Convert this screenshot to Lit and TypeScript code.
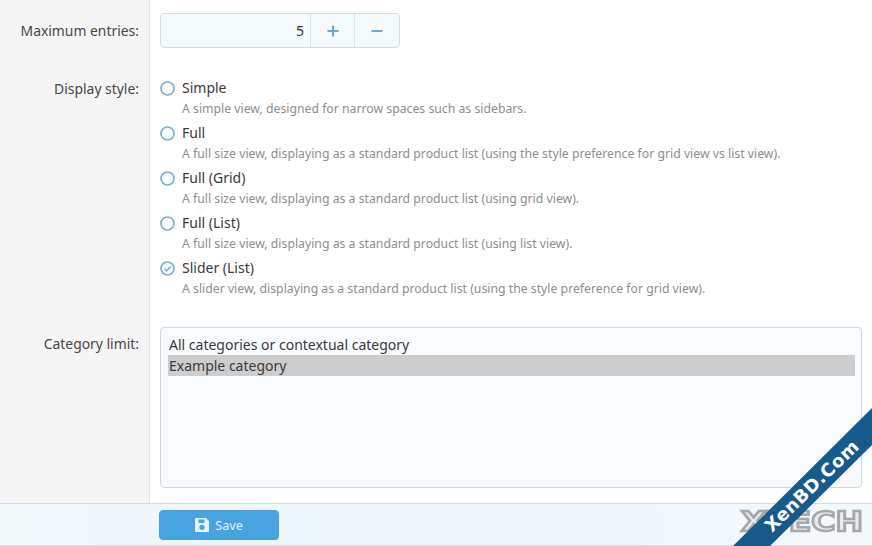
import { LitElement, html, css, svg } from "lit";
import { customElement } from "lit/decorators.js";

const OPTIONS = [
  ["Simple", "A simple view, designed for narrow spaces such as sidebars."],
  ["Full", "A full size view, displaying as a standard product list (using the style preference for grid view vs list view)."],
  ["Full (Grid)", "A full size view, displaying as a standard product list (using grid view)."],
  ["Full (List)", "A full size view, displaying as a standard product list (using list view)."],
  ["Slider (List)", "A slider view, displaying as a standard product list (using the style preference for grid view)."],
];

@customElement("app-root")
export class AppRoot extends LitElement {
  static styles = css`
    :host { display: block; position: relative; width: 872px; height: 546px; overflow: hidden; background: #fff;
      font-family: "Noto Sans", "Open Sans", sans-serif; font-size: 14px; color: #3a3a3a; }
    .form { height: 503px; display: grid; grid-template-columns: 150px 1fr; grid-template-rows: 75px 252px 176px; box-sizing: border-box; }
    .lab { background: #f5f5f5; border-right: 1px solid #e3e3e3; text-align: right; padding-right: 10px; font-size: 13.9px; color: #484848; line-height: 20px; }
    .l1 { padding-top: 21px; } .l2 { padding-top: 4px; } .l3 { padding-top: 7px; }
    .cell { padding-left: 10px; padding-right: 10px; }
    .c1 { padding-top: 13px; }
    .num { display: flex; width: 240px; height: 35px; box-sizing: border-box; border: 1px solid #d3dfe6; border-radius: 4px; background: #f5fafd; }
    .val { flex: 1; text-align: right; padding-right: 6px; line-height: 33px; color: #333; }
    .btn { width: 44px; flex: none; box-sizing: border-box; border-left: 1px solid #dbe5eb; display: flex; align-items: center; justify-content: center; }
    .btn.last { width: 45px; }
    .c2 { display: flex; flex-direction: column; gap: 5px; padding-top: 3px; }
    .opt { display: grid; grid-template-columns: 22px 1fr; height: 40px; }
    .opt svg { margin-top: 3px; }
    .t { line-height: 20px; font-size: 14px; color: #3a3a3a; }
    .d { line-height: 20px; margin-top: 1px; font-size: 12.25px; color: #8e8e8e; white-space: nowrap; }
    .list { height: 161px; box-sizing: border-box; border: 1px solid #d3d8db; border-radius: 4px; background: #f7fbfe; padding: 6px 6px 0 7px; }
    .row { height: 21px; line-height: 21px; padding-left: 1px; color: #3a3a3a; }
    .sel { background: #cdcdcd; }
    .foot { height: 43px; border-top: 1px solid #d5dbdf; border-bottom: 1px solid #d5dbdf; box-sizing: border-box; background: linear-gradient(90deg, #f3f8fb, #edf6fc 30%, #f3f8fb); padding: 6px 0 0 159px; }
    .save { width: 120px; height: 30px; border-radius: 4px; background: #47a4e0; border: 1px solid #4b9fd6; box-sizing: border-box; color: #e4f1fa; display: flex; align-items: center; justify-content: center; gap: 6px; font-size: 12.6px; }
    .mark { position: absolute; left: 741px; top: 506px; font: 700 27px/32px "DejaVu Sans", sans-serif; color: #e9ebed; -webkit-text-stroke: 2.4px #a6a8aa; transform: scaleX(1.22); transform-origin: left; filter: blur(0.5px); }
    .ribbon { position: absolute; left: 733px; top: 408px; }
    .rt { position: absolute; left: 737px; top: 472px; width: 150px; text-align: center; white-space: nowrap; font: 700 18px/28px "DejaVu Sans", sans-serif; letter-spacing: 0.5px; color: #fff; transform: rotate(-44deg); }
  `;
  render() {
    return html`
      <div class="form">
        <div class="lab l1">Maximum entries:</div>
        <div class="cell c1"><div class="num"><div class="val">5</div>
          <div class="btn"><svg width="12" height="12" viewBox="0 0 12 12"><path d="M6 0.5v11M.5 6h11" stroke="#68a9d0" stroke-width="2"/></svg></div>
          <div class="btn last"><svg width="12" height="12" viewBox="0 0 12 12"><path d="M.5 6h11" stroke="#68a9d0" stroke-width="2"/></svg></div>
        </div></div>
        <div class="lab l2">Display style:</div>
        <div class="cell c2">
          ${OPTIONS.map(([t, d], i) => html`<div class="opt">
            <svg width="16" height="16" viewBox="0 0 16 16"><circle cx="7.5" cy="7.5" r="6.5" fill="#f9fcfe" stroke="#7fb0c6" stroke-width="1.7"/>
              ${i === 4 ? svg`<path d="M4.5 7.8l2.2 2.2 4-4.4" fill="none" stroke="#7fb0c6" stroke-width="1.5"/>` : ""}</svg>
            <div><div class="t">${t}</div><div class="d">${d}</div></div></div>`)}
        </div>
        <div class="lab l3">Category limit:</div>
        <div class="cell"><div class="list"><div class="row">All categories or contextual category</div><div class="row sel">Example category</div></div></div>
      </div>
      <div class="foot"><div class="save">
        <svg width="14" height="14" viewBox="0 0 14 14"><path fill-rule="evenodd" fill="#e4f1fa" d="M1 0h10l3 3v10a1 1 0 0 1-1 1H1a1 1 0 0 1-1-1V1a1 1 0 0 1 1-1zM3.5 1.5v3.5h6V1.5zM7 6.8a2.6 2.6 0 1 0 .01 0z"/></svg>
        <span>Save</span></div></div>
      <div class="mark">XTECH</div>
      <svg class="ribbon" width="139" height="138" viewBox="0 0 139 138"><path d="M0 138L139 0v37L37 138z" fill="#175a8c"/></svg>
      <div class="rt">XenBD.Com</div>`;
  }
}
